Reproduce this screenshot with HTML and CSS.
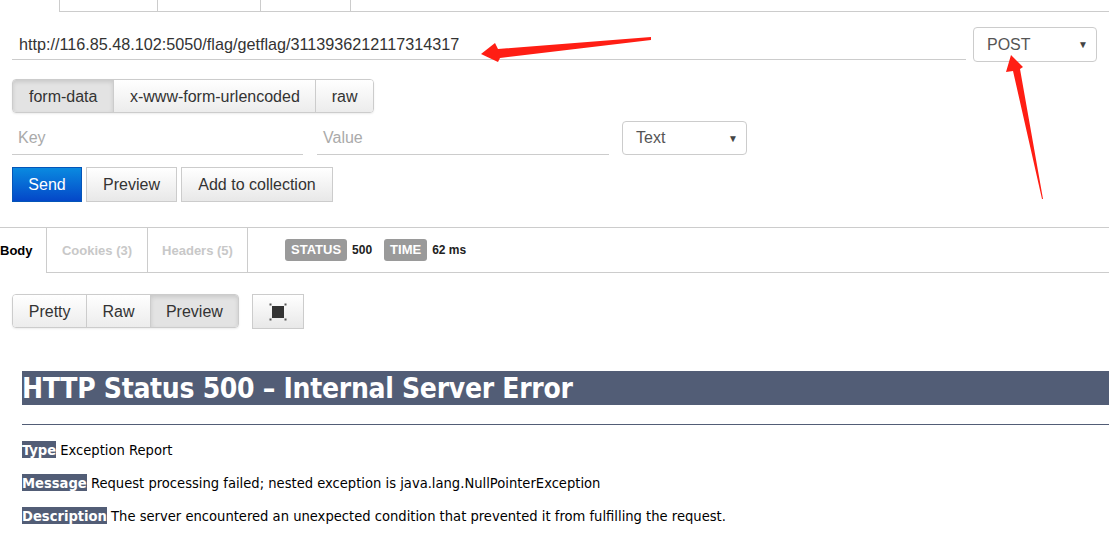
FILE: index.html
```html
<!DOCTYPE html>
<html>
<head>
<meta charset="utf-8">
<link rel="stylesheet" href="styles.css">
</head>
<body>
<div class="page">
  <div class="top-tabs">
    <div class="ttab"></div><div class="ttab w2"></div><div class="ttab w3"></div>
  </div>

  <div class="req">
    <div class="url-row">
      <div class="url-field">http://116.85.48.102:5050/flag/getflag/3113936212117314317</div>
      <div class="select method"><span>POST</span><span class="caret">▼</span></div>
    </div>

    <div class="btn-group mode">
      <div class="gbtn active">form-data</div>
      <div class="gbtn">x-www-form-urlencoded</div>
      <div class="gbtn">raw</div>
    </div>

    <div class="kv-row">
      <div class="field key">Key</div>
      <div class="field value">Value</div>
      <div class="select type"><span>Text</span><span class="caret">▼</span></div>
    </div>

    <div class="actions">
      <div class="btn send">Send</div>
      <div class="btn preview">Preview</div>
      <div class="btn add">Add to collection</div>
    </div>
  </div>

  <div class="resp-tabs">
    <div class="rtab active">Body</div>
    <div class="rtab">Cookies (3)</div>
    <div class="rtab last">Headers (5)</div>
    <div class="rfill">
      <span class="badge">STATUS</span><span class="meta">500</span>
      <span class="badge time">TIME</span><span class="meta">62 ms</span>
    </div>
  </div>

  <div class="view-row">
    <div class="btn-group view">
      <div class="gbtn">Pretty</div>
      <div class="gbtn">Raw</div>
      <div class="gbtn active">Preview</div>
    </div>
    <div class="btn full">
      <svg width="18" height="18" viewBox="0 0 18 18">
        <rect x="3" y="3" width="12" height="12" fill="#333"/>
        <rect x="0.5" y="0.5" width="2" height="2" fill="#555"/>
        <rect x="15.5" y="0.5" width="2" height="2" fill="#555"/>
        <rect x="0.5" y="15.5" width="2" height="2" fill="#555"/>
        <rect x="15.5" y="15.5" width="2" height="2" fill="#555"/>
      </svg>
    </div>
  </div>

  <div class="tc">
    <h1>HTTP Status 500 – Internal Server Error</h1>
    <hr class="line">
    <p><b>Type</b> Exception Report</p>
    <p><b>Message</b> Request processing failed; nested exception is java.lang.NullPointerException</p>
    <p><b>Description</b> The server encountered an unexpected condition that prevented it from fulfilling the request.</p>
  </div>

  <svg class="arrows" width="1109" height="535" viewBox="0 0 1109 535">
    <polygon points="651,37 651,40 500,58 498,62 481,54 495,43 498,49" fill="#ff1e14"/>
    <polygon points="1011,55 1023,67 1020,69 1043,199 1042,199 1013,71 1006,72" fill="#ff1e14"/>
  </svg>
</div>
</body>
</html>
```

FILE: styles.css
```css
* { box-sizing: border-box; }
html, body { margin: 0; padding: 0; background: #fff; }
body { font-family: "Liberation Sans", Arial, sans-serif; color: #333; overflow: hidden; }
.page { position: relative; width: 1109px; height: 535px; overflow: hidden; }

.top-tabs { display: flex; margin-left: 59px; height: 12px; border-bottom: 1px solid #ccc; }
.ttab { width: 98px; height: 11px; border-left: 1px solid #ccc; }
.ttab.w2 { width: 103px; }
.ttab.w3 { width: 91px; border-right: 1px solid #ccc; }

.req { padding: 0 12px; }
.url-row { display: flex; margin-top: 15px; height: 35px; gap: 7px; }
.url-field { flex: 1; height: 33px; border-bottom: 1px solid #ccc; font-size: 16.2px; color: #333; padding: 8px 0 0 7px; }
.select { display: flex; align-items: center; justify-content: space-between; border: 1px solid #ccc; border-radius: 4px; background: #fff; font-size: 16px; color: #555; padding: 0 8px 0 13px; height: 35px; }
.select .caret { font-size: 10px; color: #444; }
.method { width: 124px; }

.btn-group { display: flex; border: 1px solid #ccc; border-radius: 4px; overflow: hidden; box-shadow: 0 1px 2px rgba(0,0,0,0.08); }
.gbtn { font-size: 16px; color: #333; background: linear-gradient(#fff, #ececec); display: flex; align-items: center; justify-content: center; border-left: 1px solid #ccc; padding-top: 2px; }
.gbtn:first-child { border-left: none; }
.gbtn.active { background: #e3e3e3; box-shadow: inset 0 2px 4px rgba(0,0,0,0.12); }
.mode { margin-top: 17px; width: 362px; height: 34px; }
.mode .gbtn:nth-child(1) { width: 101px; }
.mode .gbtn:nth-child(2) { width: 203px; }
.mode .gbtn:nth-child(3) { width: 58px; }

.kv-row { display: flex; margin-top: 8px; height: 34px; align-items: stretch; }
.field { border-bottom: 1px solid #ccc; font-size: 16px; color: #aaa; padding: 8px 0 0 6px; }
.key { width: 291px; }
.value { width: 292px; margin-left: 14px; }
.type { width: 125px; margin-left: 13px; height: 34px; }

.actions { display: flex; gap: 4px; margin-top: 12px; height: 35px; }
.btn { display: flex; align-items: center; justify-content: center; font-size: 16px; color: #333; border: 1px solid #ccc; background: linear-gradient(#fff, #e8e8e8); }
.send { width: 70px; color: #fff; border-color: #0455b8; background: linear-gradient(#0a8ae0, #0447c8); }
.preview { width: 91px; }
.add { width: 152px; }

.resp-tabs { display: flex; margin-top: 25px; border-top: 1px solid #ccc; height: 46px; }
.rtab { height: 45px; font-size: 13px; font-weight: bold; color: #c8c8c8; display: flex; align-items: center; justify-content: center; border-bottom: 1px solid #ccc; border-left: 1px solid #ccc; width: 101px; }
.rtab.active { width: 46px; color: #000; border: none; justify-content: flex-start; }
.rtab.last { width: 101px; border-right: 1px solid #ccc; }
.rfill { flex: 1; height: 45px; border-bottom: 1px solid #ccc; display: flex; align-items: center; padding-left: 37px; font-size: 13px; }
.badge { background: #9a9a9a; color: #fff; font-weight: bold; border-radius: 3px; padding: 0 6px; height: 22px; line-height: 22px; font-size: 13px; }
.badge.time { margin-left: 12px; }
.meta { margin-left: 5px; font-weight: bold; color: #222; font-size: 12px; }

.view-row { display: flex; align-items: flex-start; margin: 21px 0 0 12px; gap: 13px; }
.view { height: 34px; width: 227px; }
.view .gbtn:nth-child(1) { width: 74px; }
.view .gbtn:nth-child(2) { width: 64px; }
.view .gbtn:nth-child(3) { width: 89px; }
.full { width: 52px; height: 35px; }

.tc { margin: 42px 0 0 22px; font-family: "DejaVu Sans Condensed", "DejaVu Sans", sans-serif; color: #000; }
.tc h1 { margin: 0; background: #525D76; color: #fff; font-size: 28px; font-weight: bold; height: 34px; line-height: 36px; letter-spacing: -0.3px; }
.tc .line { height: 1px; background: #525D76; border: none; margin: 19px 0 0 0; }
.tc p { margin: 16px 0 0 0; font-size: 14.6px; line-height: 17px; }
.tc p + p { margin-top: 16px; }
.tc b { background: #525D76; color: #fff; }

.arrows { position: absolute; left: 0; top: 0; pointer-events: none; }
```
